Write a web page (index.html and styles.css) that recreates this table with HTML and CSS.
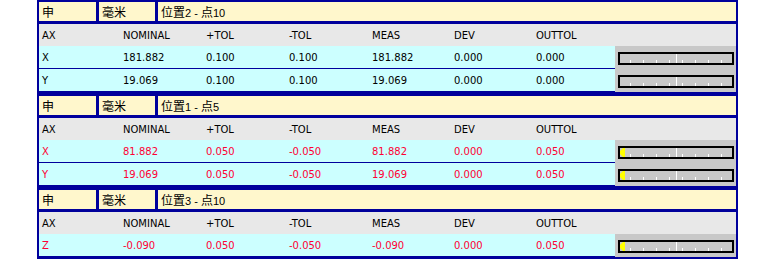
FILE: index.html
```html
<!DOCTYPE html>
<html>
<head>
<meta charset="utf-8">
<link rel="stylesheet" href="styles.css">
</head>
<body>
<div class="panel">
  <section class="block">
    <div class="head"><div class="hcell c1"><span class="cjk">申</span></div><div class="hcell c2"><span class="cjk">毫米</span></div><div class="hcell c3"><span class="cjk">位置</span>2 - <span class="cjk">点</span>10</div></div>
    <div class="row colhead"><div>AX</div><div>NOMINAL</div><div>+TOL</div><div>-TOL</div><div>MEAS</div><div>DEV</div><div>OUTTOL</div><div></div></div>
    <div class="row data"><div>X</div><div>181.882</div><div>0.100</div><div>0.100</div><div>181.882</div><div>0.000</div><div>0.000</div>
      <div class="gcell"><svg class="gauge" width="116" height="13" viewBox="0 0 116 13"><rect x="1" y="1" width="114" height="11" fill="#c8c8c8" stroke="#000" stroke-width="2"/><g stroke="#fff" stroke-width="1"><path d="M12.5 8V11M25.5 8V11M38.5 8V11M51.5 8V11M64.5 8V11M77.5 8V11M90.5 8V11M103.5 8V11M58.5 2V11"/></g></svg></div></div>
    <div class="row data"><div>Y</div><div>19.069</div><div>0.100</div><div>0.100</div><div>19.069</div><div>0.000</div><div>0.000</div>
      <div class="gcell"><svg class="gauge" width="116" height="13" viewBox="0 0 116 13"><rect x="1" y="1" width="114" height="11" fill="#c8c8c8" stroke="#000" stroke-width="2"/><g stroke="#fff" stroke-width="1"><path d="M12.5 8V11M25.5 8V11M38.5 8V11M51.5 8V11M64.5 8V11M77.5 8V11M90.5 8V11M103.5 8V11M58.5 2V11"/></g></svg></div></div>
  </section>
  <section class="block">
    <div class="head"><div class="hcell c1"><span class="cjk">申</span></div><div class="hcell c2"><span class="cjk">毫米</span></div><div class="hcell c3"><span class="cjk">位置</span>1 - <span class="cjk">点</span>5</div></div>
    <div class="row colhead"><div>AX</div><div>NOMINAL</div><div>+TOL</div><div>-TOL</div><div>MEAS</div><div>DEV</div><div>OUTTOL</div><div></div></div>
    <div class="row data out"><div>X</div><div>81.882</div><div>0.050</div><div>-0.050</div><div>81.882</div><div>0.000</div><div>0.050</div>
      <div class="gcell"><svg class="gauge" width="116" height="13" viewBox="0 0 116 13"><rect x="1" y="1" width="114" height="11" fill="#c8c8c8" stroke="#000" stroke-width="2"/><g stroke="#fff" stroke-width="1"><path d="M12.5 8V11M25.5 8V11M38.5 8V11M51.5 8V11M64.5 8V11M77.5 8V11M90.5 8V11M103.5 8V11M58.5 2V11"/></g><polygon points="2,5 5,2 7,2 7,11 5,11 2,8" fill="#ffff00"/></svg></div></div>
    <div class="row data out"><div>Y</div><div>19.069</div><div>0.050</div><div>-0.050</div><div>19.069</div><div>0.000</div><div>0.050</div>
      <div class="gcell"><svg class="gauge" width="116" height="13" viewBox="0 0 116 13"><rect x="1" y="1" width="114" height="11" fill="#c8c8c8" stroke="#000" stroke-width="2"/><g stroke="#fff" stroke-width="1"><path d="M12.5 8V11M25.5 8V11M38.5 8V11M51.5 8V11M64.5 8V11M77.5 8V11M90.5 8V11M103.5 8V11M58.5 2V11"/></g><polygon points="2,5 5,2 7,2 7,11 5,11 2,8" fill="#ffff00"/></svg></div></div>
  </section>
  <section class="block">
    <div class="head"><div class="hcell c1"><span class="cjk">申</span></div><div class="hcell c2"><span class="cjk">毫米</span></div><div class="hcell c3"><span class="cjk">位置</span>3 - <span class="cjk">点</span>10</div></div>
    <div class="row colhead"><div>AX</div><div>NOMINAL</div><div>+TOL</div><div>-TOL</div><div>MEAS</div><div>DEV</div><div>OUTTOL</div><div></div></div>
    <div class="row data out"><div>Z</div><div>-0.090</div><div>0.050</div><div>-0.050</div><div>-0.090</div><div>0.000</div><div>0.050</div>
      <div class="gcell"><svg class="gauge" width="116" height="13" viewBox="0 0 116 13"><rect x="1" y="1" width="114" height="11" fill="#c8c8c8" stroke="#000" stroke-width="2"/><g stroke="#fff" stroke-width="1"><path d="M12.5 8V11M25.5 8V11M38.5 8V11M51.5 8V11M64.5 8V11M77.5 8V11M90.5 8V11M103.5 8V11M58.5 2V11"/></g><polygon points="2,5 5,2 7,2 7,11 5,11 2,8" fill="#ffff00"/></svg></div></div>
  </section>
</div>
</body>
</html>
```
FILE: styles.css
```css
html, body {
  margin: 0;
  padding: 0;
  background: #ffffff;
}
.panel {
  margin-left: 37px;
  width: 701px;
  font-family: "DejaVu Sans", "Noto Sans CJK SC", sans-serif;
  font-size: 10px;
  color: #000;
}
.block {
  background: #00009c;
  padding: 2px 2px 3px 2px;
  display: flex;
  flex-direction: column;
}
.head {
  display: flex;
  gap: 3px;
  height: 19px;
  margin-bottom: 3px;
}
.hcell {
  background: #fff7cc;
  padding-left: 3px;
  line-height: 19px;
  font-family: "Liberation Sans", "Noto Sans CJK SC", sans-serif;
  font-size: 11px;
  white-space: nowrap;
}
.cjk {
  font-family: "Noto Sans CJK SC", sans-serif;
  font-size: 12px;
}
.c1 { width: 54px; }
.c2 { width: 53px; }
.c3 { flex: 1; }
.row {
  display: grid;
  grid-template-columns: 81px 83px 83px 83px 82px 82px 82px 1fr;
  height: 22px;
  line-height: 23px;
}
.row > div {
  padding-left: 3px;
  white-space: nowrap;
}
.colhead {
  background: #e8e8e8;
}
.data {
  background: #ccffff;
}
.data + .data {
  margin-top: 1px;
}
.out {
  color: #ff0033;
}
.row > .gcell {
  background: #c8c8c8;
  padding-left: 3px;
  padding-top: 6px;
  line-height: 0;
}
.gauge {
  display: block;
}
```
